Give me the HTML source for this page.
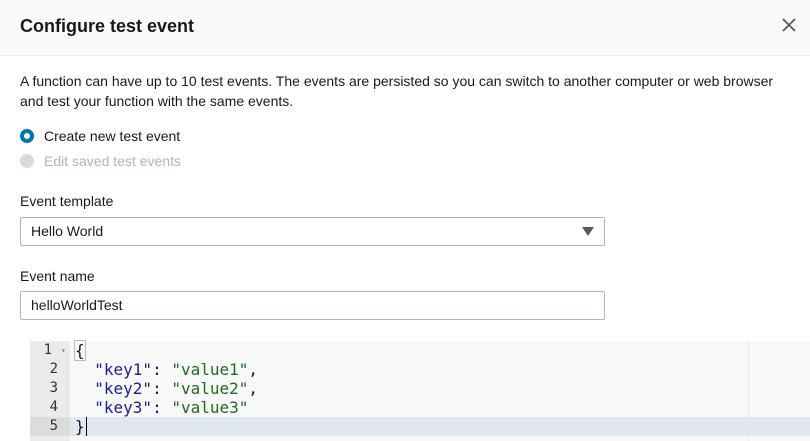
<html><head><style>
body{margin:0;width:810px;height:441px;overflow:hidden;background:#fff;font-family:"Liberation Sans",sans-serif;color:#16191f;position:relative}
.hd{position:absolute;left:0;top:0;width:810px;height:55px;background:#fafafa;border-bottom:1px solid #eaeded}
.t{position:absolute;left:20px;top:16px;font-size:18px;font-weight:bold}
.x{position:absolute;left:781px;top:17px}
.p{position:absolute;left:20px;font-size:14px;line-height:20px}
.r{position:absolute;left:20px;width:14px;height:14px;border-radius:50%}
.box{position:absolute;left:20px;height:27px;border:1px solid #aab7b8;border-radius:2px;font-size:14px;line-height:27px;padding-left:10px;box-sizing:content-box;width:573px}
.ed{position:absolute;left:30px;top:341px;width:780px;height:100px;background:#f8f8f8;font-family:"DejaVu Sans Mono","Liberation Mono",monospace;font-size:16px}
.g{position:absolute;left:0;top:0;width:40px;height:100px;background:#ebebeb}
.ln{position:absolute;height:19px;line-height:19px;white-space:pre}
.n{position:absolute;width:28px;text-align:right;color:#333;font-size:14px}
.k{color:#1a1aa6}.s{color:#1d6b1d}
</style></head><body>
<div class="hd"><div class="t">Configure test event</div>
<svg class="x" width="16" height="16" viewBox="0 0 16 16"><path d="M2 2L14 14M14 2L2 14" stroke="#545b64" stroke-width="1.8"/></svg></div>
<div class="p" style="top:71px">A function can have up to 10 test events. The events are persisted so you can switch to another computer or web browser<br>and test your function with the same events.</div>
<div class="r" style="top:129px;background:#fff;border:4px solid #0073bb;width:6px;height:6px"></div>
<div class="p" style="left:44px;top:126px">Create new test event</div>
<div class="r" style="top:154px;background:#d5dbdb"></div>
<div class="p" style="left:44px;top:151px;color:#aab7b8">Edit saved test events</div>
<div class="p" style="top:191px">Event template</div>
<div class="box" style="top:217px">Hello World<svg style="position:absolute;right:10px;top:9px" width="12" height="9"><path d="M0 0H12L6 9Z" fill="#545b64"/></svg></div>
<div class="p" style="top:266px">Event name</div>
<div class="box" style="top:291px">helloWorldTest</div>
<div class="ed"><div class="g"></div>
<div style="position:absolute;left:40px;top:76px;width:740px;height:19px;background:#e2e8f0"></div>
<div style="position:absolute;left:0;top:76px;width:40px;height:19px;background:#dcdcdc"></div>
<div style="position:absolute;left:718px;top:0;width:1px;height:100px;background:#e8e8e8"></div>
<div class="ln n" style="top:0;width:22px">1</div><div class="ln" style="left:31px;top:0;color:#888;font-size:8px">▾</div>
<div class="ln n" style="top:19px">2</div><div class="ln n" style="top:38px">3</div><div class="ln n" style="top:57px">4</div><div class="ln n" style="top:76px">5</div>
<div class="ln" style="left:45px;top:0"><span style="outline:1px solid #bbb">{</span></div>
<div class="ln" style="left:45px;top:19px">  <span class="k">"key1"</span>: <span class="s">"value1"</span>,</div>
<div class="ln" style="left:45px;top:38px">  <span class="k">"key2"</span>: <span class="s">"value2"</span>,</div>
<div class="ln" style="left:45px;top:57px">  <span class="k">"key3"</span>: <span class="s">"value3"</span></div>
<div class="ln" style="left:45px;top:76px">}<span style="border-left:1px solid #000;margin-left:1px"></span></div>
</div>
</body></html>
